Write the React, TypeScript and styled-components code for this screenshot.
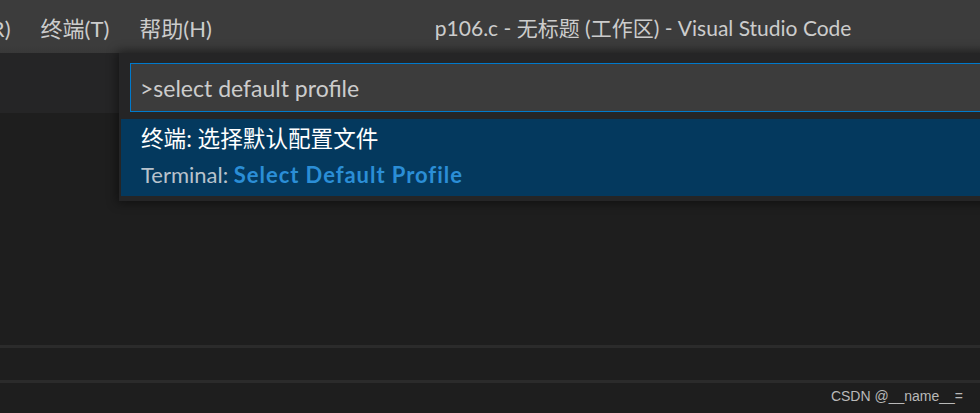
import styled, { createGlobalStyle } from "styled-components";

const GlobalStyle = createGlobalStyle`
  html, body {
    margin: 0;
    padding: 0;
    background: #1e1e1e;
    overflow: hidden;
  }
  #root {
    width: 980px;
    height: 413px;
  }
`;

const uiFont = `"Lato", "Noto Sans CJK SC", sans-serif`;

const Window = styled.div`
  width: 980px;
  height: 413px;
  display: flex;
  flex-direction: column;
  background: #1e1e1e;
  font-family: ${uiFont};
  overflow: hidden;
`;

const TitleBar = styled.div`
  height: 53px;
  flex: none;
  display: flex;
  align-items: center;
  background: linear-gradient(to bottom, #3c3c3c 85%, #383838);
  color: #cccccc;
  font-size: 22px;
  white-space: nowrap;
`;

const Menu = styled.div`
  display: flex;
  margin-left: -74px;
`;

const MenuItem = styled.div`
  padding: 0 15px;
`;

const Title = styled.div`
  margin-left: 208px;
  font-size: 21px;
`;

const Body = styled.div`
  position: relative;
  flex: 1;
  display: flex;
  flex-direction: column;
`;

const TabStrip = styled.div`
  height: 60px;
  flex: none;
  background: #252526;
`;

const Editor = styled.div`
  height: 232px;
  flex: none;
  background: #1e1e1e;
`;

const Divider = styled.div`
  height: 3px;
  flex: none;
  background: #2b2b2b;
`;

const Panel = styled.div<{ $h: number }>`
  height: ${(p) => p.$h}px;
  flex: none;
  background: #1e1e1e;
  display: flex;
  justify-content: flex-end;
  align-items: center;
`;

const Watermark = styled.div`
  font-family: "Liberation Sans", Arial, sans-serif;
  font-size: 14px;
  color: #b9b9b9;
  margin-right: 17px;
  margin-top: -4px;
`;

const QuickPick = styled.div`
  position: absolute;
  left: 119px;
  top: 0;
  width: 900px;
  padding: 10px 0 5px 0;
  background: #252526;
  box-shadow: 0 0 10px 2px rgba(0, 0, 0, 0.45);
  display: flex;
  flex-direction: column;
  gap: 7px;
`;

const InputBox = styled.div`
  margin-left: 11px;
  height: 47px;
  border: 1px solid #007acc;
  background: #3c3c3c;
  display: flex;
  align-items: center;
  padding-left: 9px;
  color: #cccccc;
  font-size: 23px;
`;

const List = styled.div`
  padding-left: 2px;
`;

const Row = styled.div<{ $selected?: boolean }>`
  height: 77px;
  background: ${(p) => (p.$selected ? "#04395e" : "transparent")};
  display: flex;
  flex-direction: column;
  justify-content: center;
  padding-left: 20px;
  padding-bottom: 2px;
  box-sizing: border-box;
  gap: 4px;
`;

const Label = styled.div`
  color: #ffffff;
  font-size: 22.6px;
  line-height: 32px;
`;

const Detail = styled.div`
  color: #b8c2cc;
  font-size: 22px;
  line-height: 32px;
`;

const Highlight = styled.span`
  color: #2b8ed6;
  font-weight: 700;
  letter-spacing: 0.95px;
`;

export default function App() {
  return (
    <>
      <GlobalStyle />
      <Window>
        <TitleBar>
          <Menu>
            <MenuItem>运行(R)</MenuItem>
            <MenuItem>终端(T)</MenuItem>
            <MenuItem>帮助(H)</MenuItem>
          </Menu>
          <Title>p106.c - 无标题 (工作区) - Visual Studio Code</Title>
        </TitleBar>
        <Body>
          <TabStrip />
          <Editor />
          <Divider />
          <Panel $h={32} />
          <Divider />
          <Panel $h={30}>
            <Watermark>CSDN @__name__=</Watermark>
          </Panel>
          <QuickPick>
            <InputBox>&gt;select default profile</InputBox>
            <List>
              <Row $selected>
                <Label>终端: 选择默认配置文件</Label>
                <Detail>
                  Terminal: <Highlight>Select Default Profile</Highlight>
                </Detail>
              </Row>
            </List>
          </QuickPick>
        </Body>
      </Window>
    </>
  );
}
